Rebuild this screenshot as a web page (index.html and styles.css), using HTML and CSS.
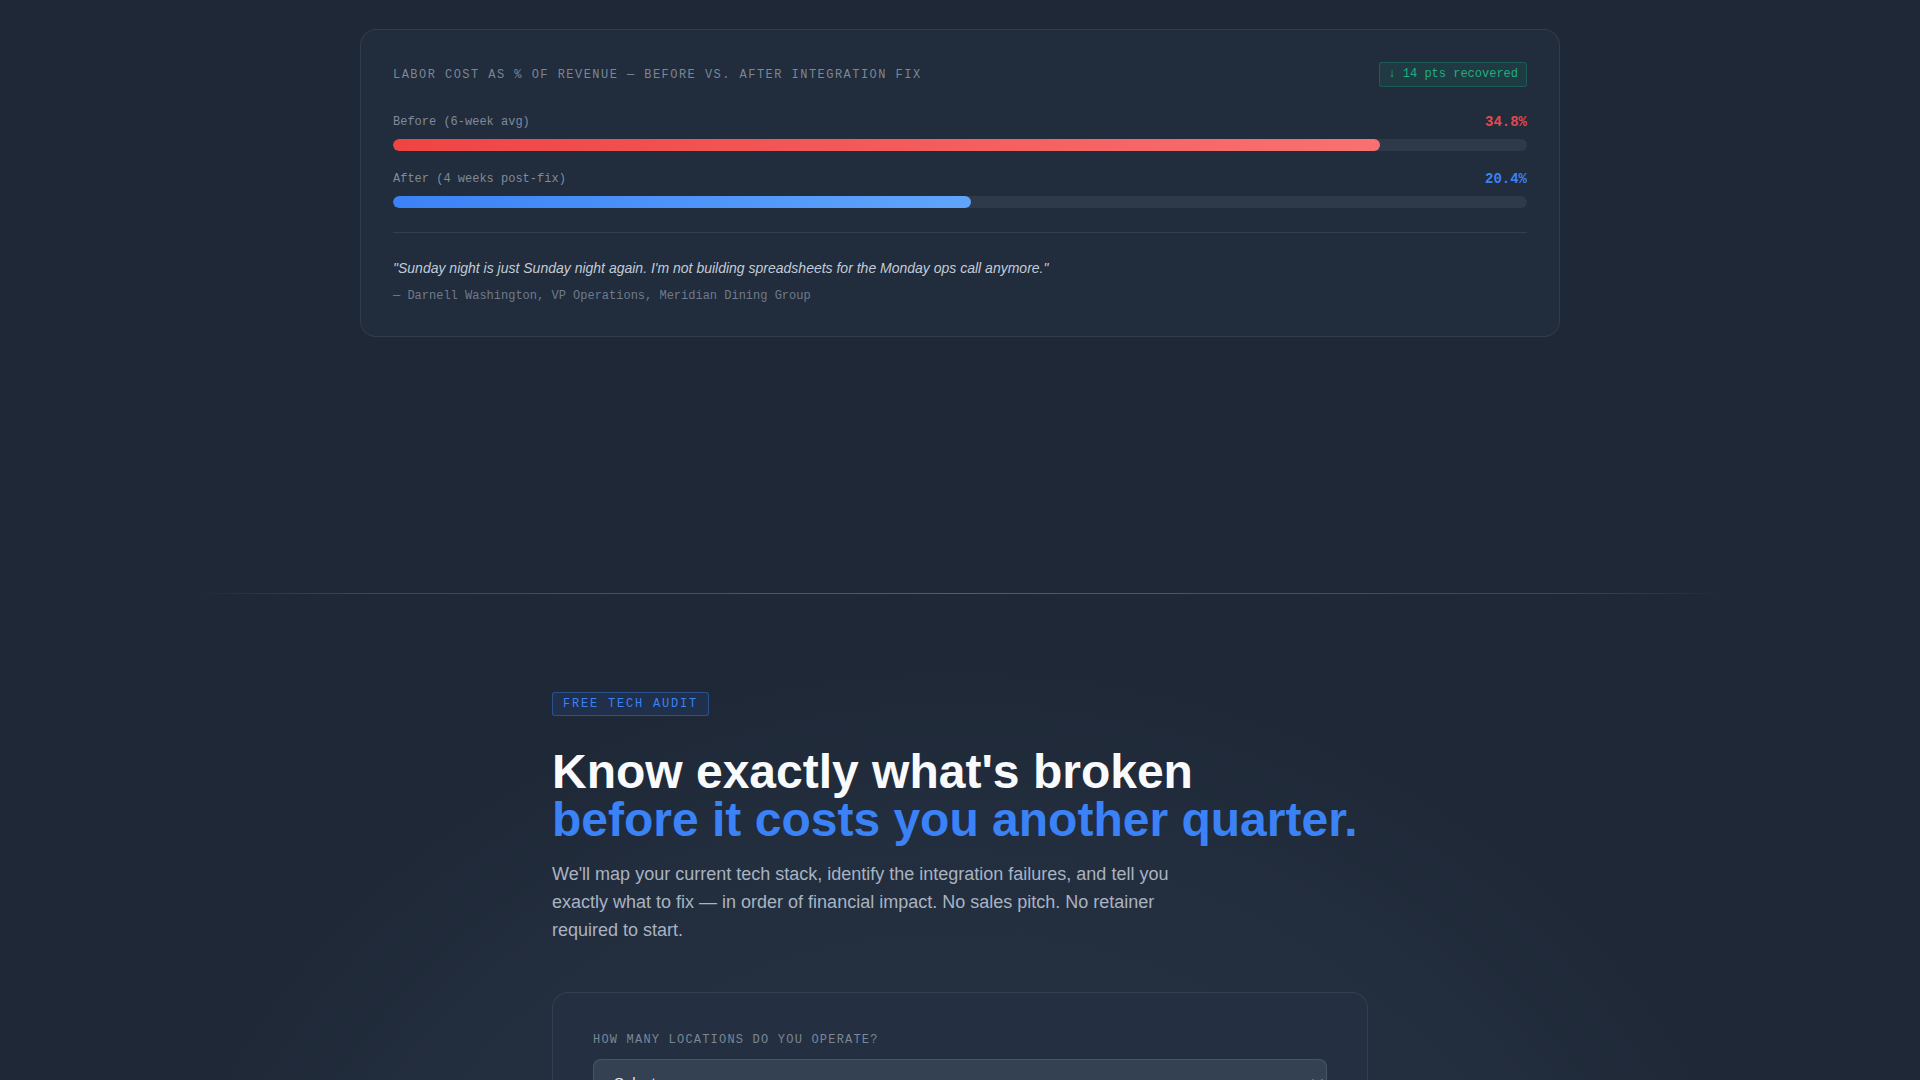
FILE: index.html
```html
<!DOCTYPE html>
<html lang="en">
<head>
<meta charset="utf-8">
<title>Free Tech Audit</title>
<link rel="stylesheet" href="styles.css">
</head>
<body>
  <section class="results">
    <div class="result-card">
      <div class="result-head">
        <h3 class="result-title">Labor cost as % of revenue — before vs. after integration fix</h3>
        <span class="pill-green">↓ 14 pts recovered</span>
      </div>

      <div class="bars">
        <div class="bar-row">
          <div class="bar-meta">
            <span class="bar-label">Before (6-week avg)</span>
            <span class="bar-value red">34.8%</span>
          </div>
          <div class="track"><div class="fill fill-red" style="width: 87%"></div></div>
        </div>
        <div class="bar-row">
          <div class="bar-meta">
            <span class="bar-label">After (4 weeks post-fix)</span>
            <span class="bar-value blue">20.4%</span>
          </div>
          <div class="track"><div class="fill fill-blue" style="width: 51%"></div></div>
        </div>
      </div>

      <blockquote class="quote">
        <p class="quote-text">"Sunday night is just Sunday night again. I'm not building spreadsheets for the Monday ops call anymore."</p>
        <p class="quote-by">— Darnell Washington, VP Operations, Meridian Dining Group</p>
      </blockquote>
    </div>
  </section>

  <div class="rule"></div>

  <section class="audit">
    <div class="audit-inner">
      <span class="tag">Free tech audit</span>
      <h2 class="audit-title">Know exactly what's broken<br><span class="accent">before it costs you another quarter.</span></h2>
      <p class="audit-lead">We'll map your current tech stack, identify the integration failures, and tell you exactly what to fix — in order of financial impact. No sales pitch. No retainer required to start.</p>

      <form class="audit-form">
        <label class="field-label" for="locations">How many locations do you operate?</label>
        <div class="select-wrap">
          <select id="locations" class="select">
            <option>Select range</option>
            <option>1–5</option>
            <option>6–20</option>
            <option>21–50</option>
            <option>50+</option>
          </select>
          <svg class="chev" width="12" height="8" viewBox="0 0 12 8" aria-hidden="true"><path d="M2 1.5l4.5 4.5 4.5-4.5" fill="none" stroke="#e2e8f0" stroke-width="1.8" stroke-linecap="round" stroke-linejoin="round"/></svg>
        </div>

        <label class="field-label" for="pos">Which POS do you run?</label>
        <div class="select-wrap">
          <select id="pos" class="select">
            <option>Select POS</option>
            <option>Toast</option>
            <option>Square</option>
            <option>Other</option>
          </select>
          <svg class="chev" width="12" height="8" viewBox="0 0 12 8" aria-hidden="true"><path d="M2 1.5l4.5 4.5 4.5-4.5" fill="none" stroke="#e2e8f0" stroke-width="1.8" stroke-linecap="round" stroke-linejoin="round"/></svg>
        </div>
      </form>
    </div>
  </section>
</body>
</html>
```

FILE: styles.css
```css
* { box-sizing: border-box; }

html, body {
  margin: 0;
  padding: 0;
}

body {
  background: #1e2837;
  color: #e2e8f0;
  font-family: "Liberation Sans", Arial, sans-serif;
}

/* ---------- results card ---------- */
.results {
  padding: 29px 0 256px;
}

.result-card {
  width: 1200px;
  margin: 0 auto;
  padding: 32px;
  background: #212c3c;
  border: 1px solid rgba(148, 163, 184, 0.14);
  border-radius: 16px;
}

.result-head {
  display: flex;
  align-items: center;
  justify-content: space-between;
  margin-bottom: 27px;
}

.result-title {
  margin: 0;
  font-family: "Liberation Mono", monospace;
  font-size: 12px;
  font-weight: normal;
  letter-spacing: 0.122em;
  text-transform: uppercase;
  color: #7b8696;
}

.pill-green {
  font-family: "Liberation Mono", monospace;
  font-size: 12px;
  line-height: 15px;
  padding: 4px 8px;
  color: #1fae80;
  background: rgba(16, 185, 129, 0.1);
  border: 1px solid rgba(16, 185, 129, 0.28);
  border-radius: 3px;
}

.bars {
  display: flex;
  flex-direction: column;
  gap: 20px;
}

.bar-meta {
  display: flex;
  align-items: center;
  justify-content: space-between;
  margin-bottom: 9px;
}

.bar-label {
  font-family: "Liberation Mono", monospace;
  font-size: 12px;
  color: #808b9b;
}

.bar-value {
  font-family: "Liberation Mono", monospace;
  font-size: 14px;
  font-weight: bold;
}

.bar-value.red { color: #e5484d; }
.bar-value.blue { color: #3b82f6; }

.track {
  height: 12px;
  border-radius: 6px;
  background: #2e3a4a;
  overflow: hidden;
}

.fill {
  height: 100%;
  border-radius: 6px;
}

.fill-red { background: linear-gradient(90deg, #ef4444, #f87171); }
.fill-blue { background: linear-gradient(90deg, #3b82f6, #60a5fa); }

.quote {
  margin: 24px 0 0;
  padding-top: 24px;
  border-top: 1px solid rgba(148, 163, 184, 0.16);
}

.quote-text {
  margin: 0;
  font-size: 14px;
  line-height: 22px;
  font-style: italic;
  color: #c3cbd7;
}

.quote-by {
  margin: 9px 0 0;
  font-family: "Liberation Mono", monospace;
  font-size: 12px;
  line-height: 16px;
  color: #6f7b8c;
}

/* ---------- section rule ---------- */
.rule {
  width: 1540px;
  height: 1px;
  margin: 0 auto;
  background: linear-gradient(90deg, rgba(71, 85, 105, 0), rgba(71, 85, 105, 0.65) 10%, rgba(100, 116, 139, 0.7) 50%, rgba(71, 85, 105, 0.65) 90%, rgba(71, 85, 105, 0));
}

/* ---------- audit section ---------- */
.audit {
  padding: 98px 0 120px;
  background: radial-gradient(ellipse 820px 720px at 50% 100%, rgba(51, 65, 85, 0.45), rgba(51, 65, 85, 0.2) 80%, rgba(51, 65, 85, 0) 100%);
}

.audit-inner {
  width: 816px;
  margin: 0 auto;
}

.tag {
  display: inline-block;
  margin-bottom: 32px;
  padding: 4px 10px;
  font-family: "Liberation Mono", monospace;
  font-size: 12px;
  line-height: 14px;
  letter-spacing: 0.15em;
  text-transform: uppercase;
  color: #3b82f6;
  background: rgba(59, 130, 246, 0.1);
  border: 1px solid rgba(59, 130, 246, 0.4);
  border-radius: 3px;
}

.audit-title {
  margin: 0 0 16px;
  font-size: 48px;
  line-height: 1;
  font-weight: bold;
  color: #f8fafc;
}

.accent { color: #3b82f6; }

.audit-lead {
  max-width: 640px;
  margin: 0 0 48px;
  font-size: 18px;
  line-height: 28px;
  color: #a9b3c2;
}

.audit-form {
  padding: 40px;
  background: #243041;
  border: 1px solid rgba(148, 163, 184, 0.14);
  border-radius: 16px;
}

.field-label {
  display: block;
  margin-bottom: 12px;
  font-family: "Liberation Mono", monospace;
  font-size: 12px;
  letter-spacing: 0.1em;
  text-transform: uppercase;
  color: #7b8696;
}

.select-wrap {
  position: relative;
  margin-bottom: 24px;
}

.select {
  display: block;
  width: 100%;
  padding: 14px 20px;
  appearance: none;
  -webkit-appearance: none;
  font-family: "Liberation Sans", Arial, sans-serif;
  font-size: 15px;
  color: #e2e8f0;
  background: #334152;
  border: 1px solid rgba(148, 163, 184, 0.2);
  border-radius: 8px;
}

.chev {
  position: absolute;
  right: 4px;
  top: 50%;
  transform: translateY(-50%);
}
```
